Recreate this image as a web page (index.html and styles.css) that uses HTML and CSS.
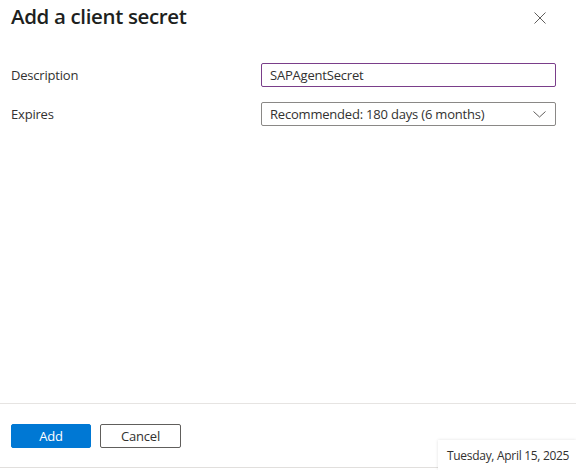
FILE: index.html
```html
<!DOCTYPE html>
<html lang="en">
<head>
<meta charset="utf-8">
<title>Add a client secret</title>
<link rel="stylesheet" href="styles.css">
</head>
<body>
<div class="panel">
  <header class="header">
    <h1 class="title">Add a client secret</h1>
    <button class="close" aria-label="Close">
      <svg width="12" height="12" viewBox="0 0 12 12"><path d="M0.5 0.5 L11.5 11.5 M11.5 0.5 L0.5 11.5" stroke="#605e5c" stroke-width="1" fill="none"/></svg>
    </button>
  </header>
  <main class="form">
    <div class="row">
      <label class="label">Description</label>
      <div class="field field-input">SAPAgentSecret</div>
    </div>
    <div class="row">
      <label class="label">Expires</label>
      <div class="field field-select">
        <span>Recommended: 180 days (6 months)</span>
        <svg class="chev" width="13" height="7" viewBox="0 0 13 7"><path d="M0.5 0.5 L6.5 6 L12.5 0.5" stroke="#605e5c" stroke-width="1" fill="none"/></svg>
      </div>
    </div>
  </main>
  <footer class="footer">
    <button class="btn btn-primary">Add</button>
    <button class="btn btn-default">Cancel</button>
  </footer>
  <div class="tooltip">Tuesday, April 15, 2025</div>
</div>
</body>
</html>
```
FILE: styles.css
```css
* { box-sizing: border-box; }
html, body { margin: 0; padding: 0; background: #fff; }
body {
  font-family: "Open Sans", "Noto Sans", sans-serif;
  color: #323130;
  font-size: 13px;
  letter-spacing: -0.2px;
}
.panel {
  position: relative;
  width: 576px;
  height: 470px;
  display: flex;
  flex-direction: column;
  overflow: hidden;
}
.header {
  display: flex;
  justify-content: space-between;
  align-items: flex-start;
  padding: 2px 30px 0 11px;
}
.title {
  margin: 0;
  font-size: 20.5px;
  line-height: 28px;
  font-weight: 600;
  color: #201f1e;
  letter-spacing: -0.35px;
}
.close {
  margin-top: 10px;
  padding: 0;
  border: 0;
  background: none;
  width: 12px;
  height: 12px;
  display: block;
}
.close svg { display: block; }
.form {
  flex: 1;
  display: flex;
  flex-direction: column;
  gap: 15px;
  padding: 33px 20px 0 11px;
}
.row {
  display: flex;
  align-items: center;
  height: 24px;
}
.label {
  width: 250px;
  flex: none;
  font-size: 13px;
}
.field {
  width: 295px;
  height: 24px;
  border-radius: 2px;
  display: flex;
  align-items: center;
  padding: 0 8px;
  font-size: 13px;
  white-space: nowrap;
}
.field-input {
  border: 1px solid #7a3e8a;
}
.field-select {
  border: 1px solid #8a8886;
  justify-content: space-between;
  padding-right: 9px;
}
.chev { display: block; margin-top: 1px; }
.footer {
  border-top: 1px solid #e6e4e2;
  border-bottom: 1px solid #e1dfdd;
  padding: 20px 11px 19px;
  margin-bottom: 2px;
  display: flex;
  gap: 9px;
}
.btn {
  width: 80px;
  height: 24px;
  border-radius: 2px;
  font-family: "Open Sans", "Noto Sans", sans-serif;
  font-size: 13px;
  letter-spacing: -0.2px;
  padding: 0;
  line-height: 22px;
}
.btn-primary {
  background: #0078d4;
  border: 1px solid #0078d4;
  color: #fff;
}
.btn-default {
  width: 81px;
  background: #fff;
  border: 1px solid #605e5c;
  color: #323130;
}
.tooltip {
  position: absolute;
  right: 0;
  bottom: 0;
  width: 138px;
  height: 30px;
  background: #fff;
  box-shadow: 0 0 3px rgba(0, 0, 0, 0.12);
  padding: 8px 0 0 9px;
  font-size: 12px;
  letter-spacing: -0.3px;
  line-height: 16px;
  white-space: nowrap;
  color: #323130;
}
```
